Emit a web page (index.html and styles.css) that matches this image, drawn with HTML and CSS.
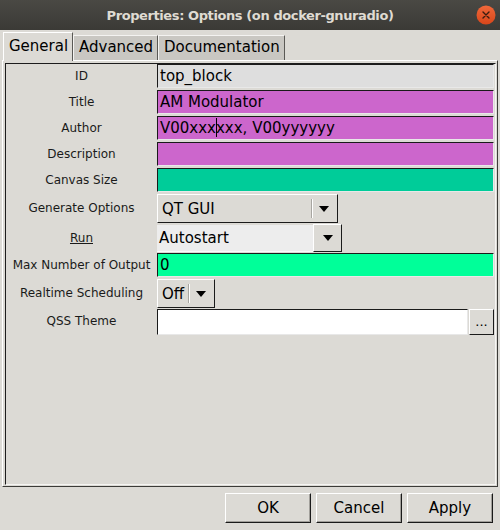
FILE: index.html
```html
<!DOCTYPE html>
<html>
<head>
<meta charset="utf-8">
<link rel="stylesheet" href="styles.css">
</head>
<body>
<div class="window">
  <div class="titlebar">
    <span class="title">Properties: Options (on docker-gnuradio)</span>
    <span class="close"><svg width="20" height="20" viewBox="0 0 20 20"><circle cx="10" cy="10" r="9.5" fill="url(#g)"/><defs><linearGradient id="g" x1="0" y1="0" x2="0" y2="1"><stop offset="0" stop-color="#f0683a"/><stop offset="1" stop-color="#d8461a"/></linearGradient></defs><path d="M7 7L13 13M13 7L7 13" stroke="#3a1c10" stroke-width="1.4" stroke-linecap="round"/></svg></span>
  </div>
  <div class="body">
    <div class="tabs">
      <div class="tab active">General</div>
      <div class="tab">Advanced</div>
      <div class="tab">Documentation</div>
    </div>
    <div class="panel">
      <div class="scroll">
        <div class="grid">
          <div class="label">ID</div>
          <div class="field f-id">top_block</div>
          <div class="label">Title</div>
          <div class="field f-mag">AM Modulator</div>
          <div class="label">Author</div>
          <div class="field f-mag">V00xxx<span class="caret"></span>xxx, V00yyyyyy</div>
          <div class="label">Description</div>
          <div class="field f-mag"></div>
          <div class="label">Canvas Size</div>
          <div class="field f-teal"></div>

          <div class="label row29">Generate Options</div>
          <div class="combo c-gen"><span class="ctext">QT GUI</span><span class="sep"></span><span class="arrow"></span></div>

          <div class="label row28"><u>Run</u></div>
          <div class="ecombo"><span class="etext">Autostart</span><span class="ebtn"><span class="arrow"></span></span></div>

          <div class="label">Max Number of Output</div>
          <div class="field f-green mb1">0</div>

          <div class="label row29">Realtime Scheduling</div>
          <div class="combo c-off"><span class="ctext">Off</span><span class="sep"></span><span class="arrow"></span></div>

          <div class="label">QSS Theme</div>
          <div class="qss"><span class="field f-white"></span><span class="dots">...</span></div>
        </div>
      </div>
    </div>
    <div class="buttons">
      <div class="btn">OK</div>
      <div class="btn">Cancel</div>
      <div class="btn">Apply</div>
    </div>
  </div>
</div>
</body>
</html>
```
FILE: styles.css
```css
* { box-sizing: border-box; }
html, body { margin: 0; padding: 0; }
body {
  width: 500px;
  height: 530px;
  overflow: hidden;
  font-family: "DejaVu Sans", sans-serif;
  background: #dcdad5;
  color: #000;
}
.window { width: 500px; height: 530px; display: flex; flex-direction: column; }
.titlebar {
  height: 30px;
  background: linear-gradient(#4a4944, #3b3a36);
  display: flex;
  align-items: center;
  justify-content: center;
  position: relative;
}
.title {
  color: #dfdbd2;
  font-weight: bold;
  font-size: 13px;
  letter-spacing: -0.4px;
}
.close {
  position: absolute;
  right: 4px;
  top: 5px;
  width: 20px;
  height: 20px;
  display: block;
}
.close svg { display: block; }
.body { flex: 1; display: flex; flex-direction: column; background: #dcdad5; }
.tabs {
  display: flex;
  align-items: flex-end;
  height: 30px;
  padding-left: 3px;
  position: relative;
  z-index: 2;
}
.tab {
  font-size: 15px;
  height: 25px;
  line-height: 23px;
  padding: 0 5px 0 5px;
  background: #c9c7c2;
  border-top: 1px solid #f4f3f1;
  border-left: 1px solid #f4f3f1;
  border-right: 1px solid #5a5955;
  color: #000;
}
.tab:nth-child(2) { width: 85px; }
.tab:nth-child(3) { width: 127px; }
.tab.active {
  width: 70px;
  height: 29px;
  line-height: 27px;
  background: #dcdad5;
  margin-bottom: -1px;
  border-top-color: #fff;
  border-left-color: #fff;
}
.panel {
  margin-left: 2px;
  width: 496px;
  height: 427px;
  border-top: 1px solid #fff;
  border-left: 1px solid #fff;
  border-right: 1px solid #3c3b38;
  border-bottom: 1px solid #3c3b38;
  padding: 2px 1px 1px 2px;
}
.scroll {
  width: 491px;
  height: 422px;
  border-top: 1px solid #1c1c1c;
  border-left: 1px solid #1c1c1c;
  border-right: 1px solid #f6f5f3;
  border-bottom: 1px solid #f6f5f3;
}
.grid {
  display: grid;
  grid-template-columns: 151px 337px;
  align-items: start;
}
.label {
  font-size: 12px;
  color: #1a1a1a;
  text-align: center;
  height: 26px;
  line-height: 24px;
}
.label.row29 { height: 30px; line-height: 29px; }
.label.row28 { height: 29px; line-height: 28px; }
.field {
  display: block;
  height: 24px;
  margin-bottom: 2px;
  font-size: 15px;
  line-height: 22px;
  padding-left: 2px;
  border-top: 1px solid #1a1a1a;
  border-left: 1px solid #1a1a1a;
  border-right: 1px solid #e8e8e8;
  border-bottom: 1px solid #e8e8e8;
  white-space: nowrap;
}
.field.mb1 { margin-bottom: 1px; }
.f-id { background: #dedede; }
.f-mag { background: #cc66cc; }
.f-teal { background: #00cc99; }
.f-green { background: #00ff99; }
.f-white { background: #fff; height: 26px; margin-bottom: 0; flex: 1; }
.caret {
  display: inline-block;
  width: 1px;
  height: 19px;
  background: #000;
  vertical-align: -4px;
  margin-right: -1px;
}
.combo {
  height: 29px;
  margin-bottom: 1px;
  display: flex;
  align-items: center;
  background: #dcdad5;
  border-top: 1px solid #fff;
  border-left: 1px solid #fff;
  border-right: 1px solid #1a1a1a;
  border-bottom: 1px solid #1a1a1a;
  font-size: 15px;
}
.c-gen { width: 181px; }
.c-off { width: 58px; }
.ctext { padding-left: 4px; flex: 1; }
.sep {
  width: 2px;
  height: 19px;
  border-left: 1px solid #a8a6a1;
  border-right: 1px solid #fff;
  margin-right: 6px;
}
.arrow {
  width: 0;
  height: 0;
  border-left: 5px solid transparent;
  border-right: 5px solid transparent;
  border-top: 6px solid #000;
  margin-right: 8px;
}
.ecombo {
  width: 185px;
  height: 28px;
  margin-bottom: 1px;
  display: flex;
}
.etext {
  flex: 1;
  background: #ededed;
  font-size: 15px;
  line-height: 26px;
  padding-left: 2px;
  border-top: 1px solid #dcdad5;
  border-bottom: 1px solid #fafafa;
}
.ebtn {
  width: 29px;
  display: flex;
  align-items: center;
  justify-content: center;
  background: #dcdad5;
  border-top: 1px solid #fff;
  border-left: 1px solid #fff;
  border-right: 1px solid #1a1a1a;
  border-bottom: 1px solid #1a1a1a;
}
.ebtn .arrow { margin: 0; }
.qss { display: flex; gap: 1px; height: 26px; }
.dots {
  width: 25px;
  height: 26px;
  background: #dcdad5;
  border-top: 1px solid #fff;
  border-left: 1px solid #fff;
  border-right: 1px solid #1a1a1a;
  border-bottom: 1px solid #1a1a1a;
  font-size: 13px;
  text-align: center;
  line-height: 24px;
}
.buttons {
  display: flex;
  justify-content: flex-end;
  gap: 5px;
  padding: 6px 7px 0 0;
}
.btn {
  width: 86px;
  height: 30px;
  font-size: 15px;
  text-align: center;
  line-height: 28px;
  background: #dcdad5;
  border-top: 1px solid #fff;
  border-left: 1px solid #fff;
  border-right: 1px solid #1a1a1a;
  border-bottom: 1px solid #1a1a1a;
  box-shadow: inset -1px -1px 0 #a19f9a;
}
```
